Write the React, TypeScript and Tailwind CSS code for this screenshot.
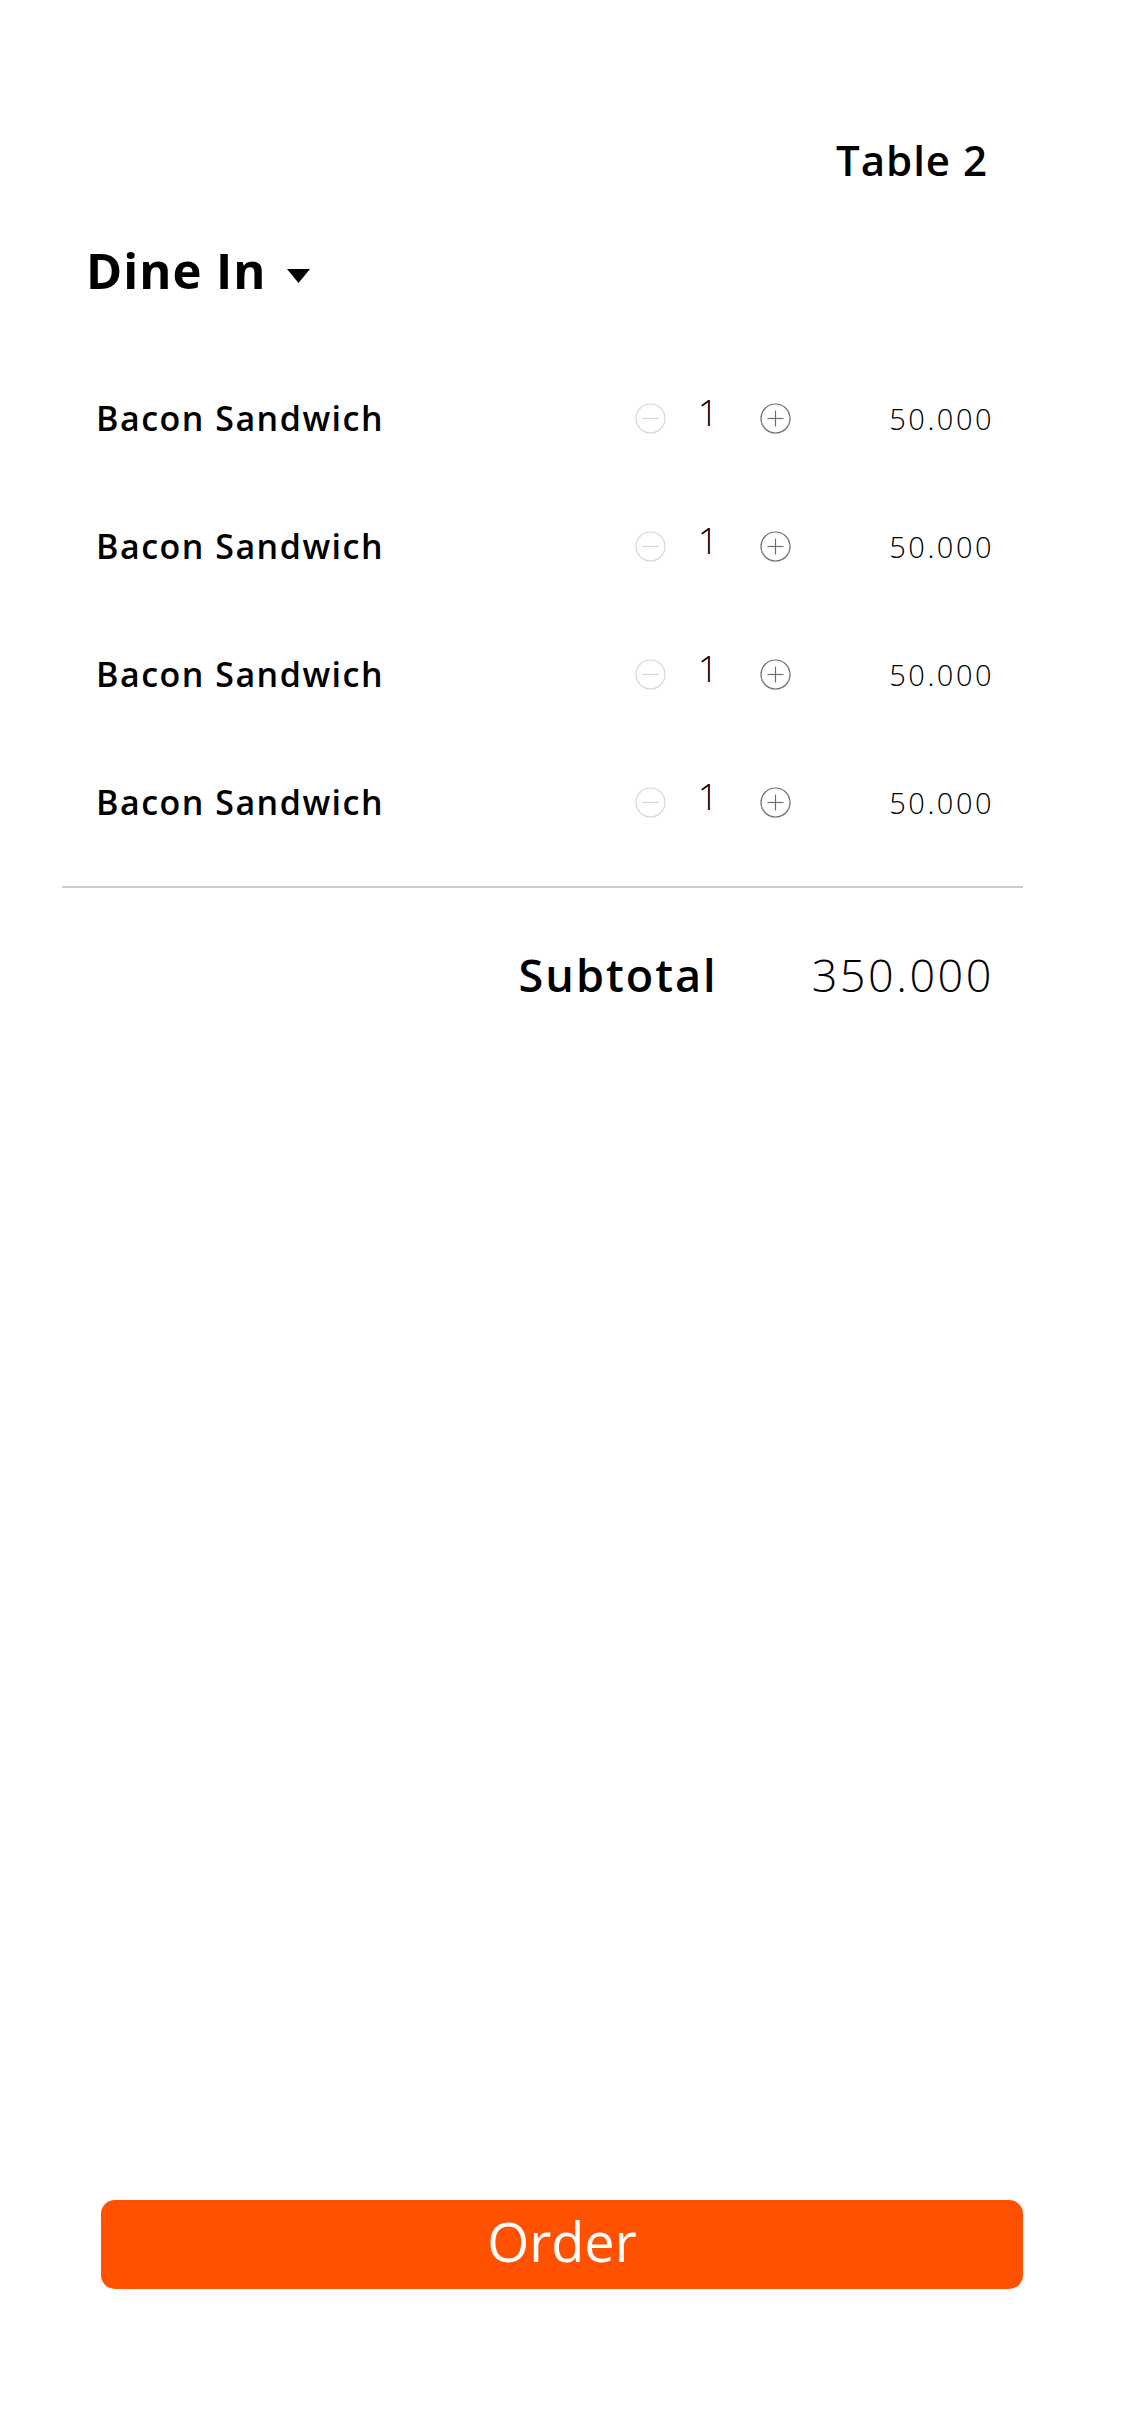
import React from "react";

type Item = { name: string; qty: number; price: string };

const items: Item[] = [
  { name: "Bacon Sandwich", qty: 1, price: "50.000" },
  { name: "Bacon Sandwich", qty: 1, price: "50.000" },
  { name: "Bacon Sandwich", qty: 1, price: "50.000" },
  { name: "Bacon Sandwich", qty: 1, price: "50.000" },
];

const CircleIcon = ({ plus, color }: { plus?: boolean; color: string }) => (
  <svg width="31" height="31" viewBox="0 0 31 31" fill="none">
    <circle cx="15.5" cy="15.5" r="14.5" stroke={color} strokeWidth="1.2" />
    <line x1="7.5" y1="15.5" x2="23.5" y2="15.5" stroke={color} strokeWidth="1.2" />
    {plus && <line x1="15.5" y1="7.5" x2="15.5" y2="23.5" stroke={color} strokeWidth="1.2" />}
  </svg>
);

const Row = ({ item }: { item: Item }) => (
  <div className="flex items-center h-[128px] ml-[96px] w-[898px]">
    <div className="w-[539px] text-[34px] font-semibold tracking-[1.5px] text-black leading-none">
      {item.name}
    </div>
    <button className="w-[31px] h-[31px] flex items-center justify-center">
      <CircleIcon color="#d6d6d6" />
    </button>
    <div className="w-[94px] pr-[10px] text-center text-[36px] font-light leading-none text-black -mt-[10px]">
      {item.qty}
    </div>
    <button className="w-[31px] h-[31px] flex items-center justify-center">
      <CircleIcon plus color="#6e6e6e" />
    </button>
    <div className="flex-1 text-right text-[29px] font-light tracking-[2.5px] leading-none text-black">
      {item.price}
    </div>
  </div>
);

export default function App() {
  return (
    <div className="w-[1125px] min-h-[2436px] bg-white flex flex-col font-['Open_Sans',sans-serif]">
      <div className="mt-[130px] h-[60px] flex items-center justify-end pr-[137px]">
        <span className="text-[42px] font-semibold tracking-[1px] leading-none text-black">Table 2</span>
      </div>

      <div className="mt-[50px] h-[60px] flex items-center pl-[86px]">
        <span className="text-[49px] font-bold tracking-[1px] leading-none text-black">Dine In</span>
        <svg width="23" height="14" viewBox="0 0 23 14" className="ml-[20px] mt-[12px]">
          <polygon points="0,0 23,0 11.5,14" fill="#000" />
        </svg>
      </div>

      <div className="mt-[54px] flex flex-col">
        {items.map((item, i) => (
          <Row key={i} item={item} />
        ))}
      </div>

      <div className="mt-[20px] ml-[62px] w-[961px] h-[2px] bg-[#cccccc]" />

      <div className="mt-[56px] h-[60px] flex items-center justify-end pr-[131px] gap-[94px]">
        <span className="text-[45px] font-semibold tracking-[2px] leading-none text-black">Subtotal</span>
        <span className="text-[45px] font-light tracking-[2.5px] leading-none text-black">350.000</span>
      </div>

      <div className="mt-auto mb-[147px] ml-[101px] w-[922px]">
        <button className="w-full h-[89px] rounded-[14px] bg-[#ff5100] flex items-center justify-center">
          <span className="text-white text-[54px] font-medium leading-none -mt-[8px]">Order</span>
        </button>
      </div>
    </div>
  );
}
